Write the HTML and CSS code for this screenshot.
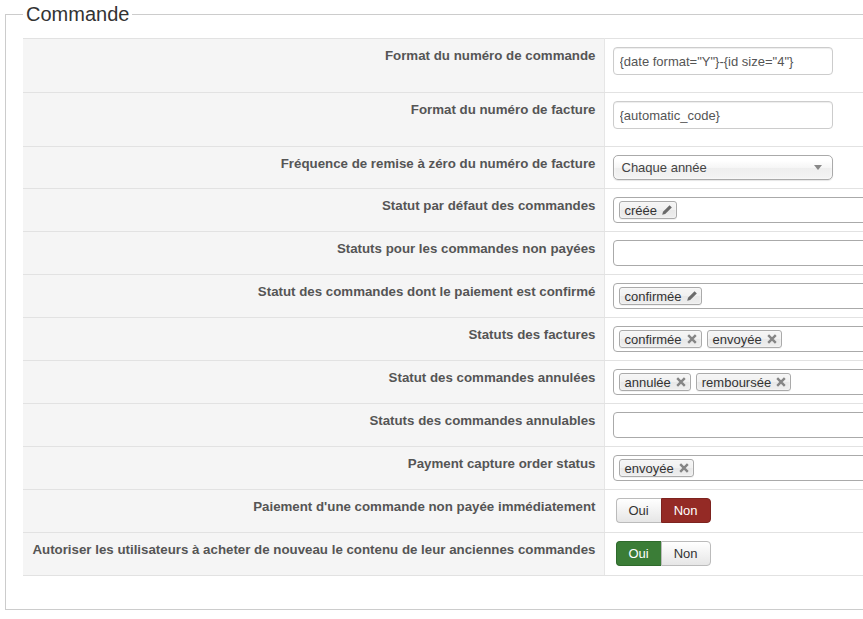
FILE: index.html
```html
<!DOCTYPE html>
<html lang="fr">
<head>
<meta charset="utf-8">
<title>Commande</title>
<link rel="stylesheet" href="styles.css">
</head>
<body>
<fieldset class="panel">
  <legend class="panel-title">Commande</legend>
  <table class="config">
    <colgroup><col class="c-key"><col class="c-val"></colgroup>
    <tr>
      <td class="key">Format du numéro de commande</td>
      <td class="val"><input class="text" type="text" value='{date format="Y"}-{id size="4"}'></td>
    </tr>
    <tr>
      <td class="key">Format du numéro de facture</td>
      <td class="val"><input class="text" type="text" value="{automatic_code}"></td>
    </tr>
    <tr>
      <td class="key">Fréquence de remise à zéro du numéro de facture</td>
      <td class="val">
        <div class="select"><span>Chaque année</span><span class="arrow"></span></div>
      </td>
    </tr>
    <tr>
      <td class="key">Statut par défaut des commandes</td>
      <td class="val"><div class="tags"><span class="tag">créée<svg class="ico" viewBox="0 0 12 12"><path d="M1.2 10.8 L2 7.8 L8.6 1.2 L10.8 3.4 L4.2 10 Z" fill="#6a6a6a"/></svg></span></div></td>
    </tr>
    <tr>
      <td class="key">Statuts pour les commandes non payées</td>
      <td class="val"><div class="tags"></div></td>
    </tr>
    <tr>
      <td class="key">Statut des commandes dont le paiement est confirmé</td>
      <td class="val"><div class="tags"><span class="tag">confirmée<svg class="ico" viewBox="0 0 12 12"><path d="M1.2 10.8 L2 7.8 L8.6 1.2 L10.8 3.4 L4.2 10 Z" fill="#6a6a6a"/></svg></span></div></td>
    </tr>
    <tr>
      <td class="key">Statuts des factures</td>
      <td class="val"><div class="tags"><span class="tag">confirmée<svg class="ico" viewBox="0 0 12 12"><path d="M2.2 2.2 L9.8 9.8 M9.8 2.2 L2.2 9.8" stroke="#858585" stroke-width="2.4"/></svg></span><span class="tag">envoyée<svg class="ico" viewBox="0 0 12 12"><path d="M2.2 2.2 L9.8 9.8 M9.8 2.2 L2.2 9.8" stroke="#858585" stroke-width="2.4"/></svg></span></div></td>
    </tr>
    <tr>
      <td class="key">Statut des commandes annulées</td>
      <td class="val"><div class="tags"><span class="tag">annulée<svg class="ico" viewBox="0 0 12 12"><path d="M2.2 2.2 L9.8 9.8 M9.8 2.2 L2.2 9.8" stroke="#858585" stroke-width="2.4"/></svg></span><span class="tag">remboursée<svg class="ico" viewBox="0 0 12 12"><path d="M2.2 2.2 L9.8 9.8 M9.8 2.2 L2.2 9.8" stroke="#858585" stroke-width="2.4"/></svg></span></div></td>
    </tr>
    <tr>
      <td class="key">Statuts des commandes annulables</td>
      <td class="val"><div class="tags"></div></td>
    </tr>
    <tr>
      <td class="key">Payment capture order status</td>
      <td class="val"><div class="tags"><span class="tag">envoyée<svg class="ico" viewBox="0 0 12 12"><path d="M2.2 2.2 L9.8 9.8 M9.8 2.2 L2.2 9.8" stroke="#858585" stroke-width="2.4"/></svg></span></div></td>
    </tr>
    <tr>
      <td class="key">Paiement d'une commande non payée immédiatement</td>
      <td class="val"><div class="toggle"><span class="btn">Oui</span><span class="btn no-on">Non</span></div></td>
    </tr>
    <tr>
      <td class="key">Autoriser les utilisateurs à acheter de nouveau le contenu de leur anciennes commandes</td>
      <td class="val"><div class="toggle"><span class="btn yes-on">Oui</span><span class="btn">Non</span></div></td>
    </tr>
  </table>
</fieldset>
</body>
</html>
```

FILE: styles.css
```css
html, body {
  margin: 0;
  padding: 0;
  background: #fff;
  overflow: hidden;
}
body {
  font-family: "Liberation Sans", Arial, sans-serif;
  font-size: 13px;
  color: #333;
}
.panel {
  margin: 2px 0 0 5px;
  width: 900px;
  border: 1px solid #cccccc;
  padding: 12px 0 33px 17px;
  box-sizing: border-box;
}
.panel-title {
  font-size: 20px;
  line-height: 24px;
  color: #333;
  padding: 0 3px;
  margin: 0;
}
.config {
  border-collapse: collapse;
  table-layout: fixed;
  width: 880px;
}
.c-key {
  width: 581px;
}
.config td {
  border-top: 1px solid #e2e2e2;
  border-bottom: 1px solid #e2e2e2;
  vertical-align: top;
  padding: 8px;
}
.key {
  background: #f5f5f5;
  text-align: right;
  font-weight: bold;
  font-size: 13.3px;
  white-space: nowrap;
  color: #555;
  line-height: 18px;
  border-right: 1px solid #e6e6e6;
}
.val {
  background: #fff;
}
.text {
  display: block;
  box-sizing: border-box;
  width: 220px;
  height: 28px;
  margin: 0 0 9px 0;
  padding: 4px 6px;
  border: 1px solid #cccccc;
  border-radius: 4px;
  font-family: "Liberation Sans", Arial, sans-serif;
  font-size: 13px;
  color: #555;
  box-shadow: inset 0 1px 1px rgba(0,0,0,0.075);
}
.select {
  box-sizing: border-box;
  width: 220px;
  height: 25px;
  display: flex;
  align-items: center;
  justify-content: space-between;
  padding: 0 10px 0 8px;
  border: 1px solid #aaa;
  border-radius: 5px;
  background: linear-gradient(#ffffff 20%, #f6f6f6 50%, #eeeeee 52%, #f4f4f4 100%);
  box-shadow: inset 0 0 3px #fff, 0 1px 1px rgba(0,0,0,0.1);
  color: #444;
  font-size: 13px;
}
.arrow {
  width: 0;
  height: 0;
  border-left: 4px solid transparent;
  border-right: 4px solid transparent;
  border-top: 5px solid #888;
}
.tags {
  box-sizing: border-box;
  width: 330px;
  height: 26px;
  border: 1px solid #aaa;
  border-radius: 4px;
  background: #fff;
  display: flex;
  align-items: center;
  padding-left: 5px;
  gap: 5px;
}
.tag {
  display: inline-flex;
  align-items: center;
  height: 18px;
  box-sizing: border-box;
  padding: 0 3px 0 5px;
  border: 1px solid #aaa;
  border-radius: 3px;
  background: linear-gradient(#f4f4f4 20%, #f0f0f0 50%, #e8e8e8 52%, #eeeeee 100%);
  box-shadow: inset 0 0 2px #fff, 0 1px 0 rgba(0,0,0,0.05);
  color: #333;
  font-size: 13px;
  line-height: 13px;
}
.ico {
  width: 12px;
  height: 12px;
  margin-left: 4px;
}
.toggle {
  display: flex;
  margin: 0 0 1px 3px;
}
.btn {
  box-sizing: border-box;
  height: 25px;
  padding: 0 12px;
  display: flex;
  align-items: center;
  font-size: 13px;
  color: #333;
  border: 1px solid #bbb;
  background: linear-gradient(#ffffff, #e6e6e6);
}
.btn:first-child {
  border-radius: 4px 0 0 4px;
  border-right: 0;
}
.btn:last-child {
  border-radius: 0 4px 4px 0;
}
.btn.no-on {
  background: #942a25;
  border-color: #7d231f;
  color: #fff;
}
.btn.yes-on {
  background: #3b7d37;
  border-color: #2f6a2c;
  color: #fff;
}
```
